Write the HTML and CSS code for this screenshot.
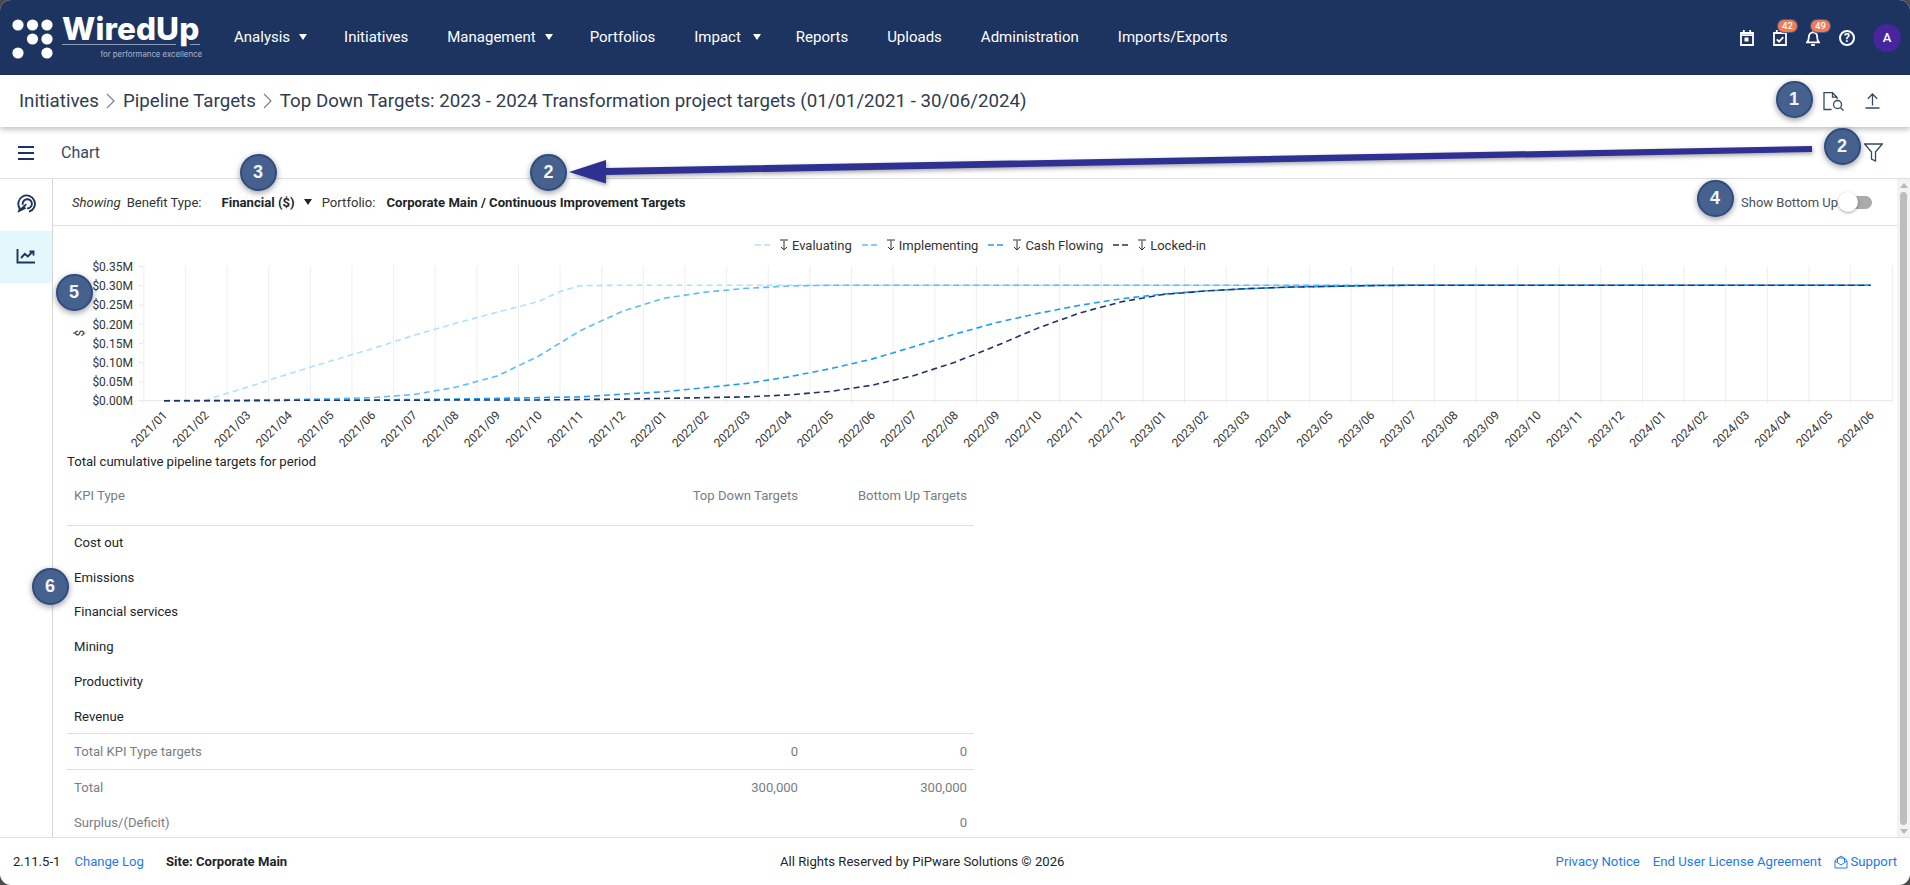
FILE: index.html
```
<!DOCTYPE html>
<html lang="en">
<head>
<meta charset="utf-8">
<title>WiredUp - Top Down Targets</title>
<link rel="stylesheet" href="styles.css">
</head>
<body>
<div class="app">
  <header class="topbar">
    <div class="logo">
      <svg class="logo-dots" viewBox="0 0 62 75" width="62" height="75">
        <circle cx="18" cy="25" r="5.6"/><circle cx="32.5" cy="25" r="5.6"/><circle cx="47" cy="25" r="5.6"/>
        <circle cx="32.5" cy="39" r="5.6"/><circle cx="47" cy="39" r="5.6"/>
        <circle cx="18" cy="53" r="5.6"/><circle cx="47" cy="53" r="5.6"/>
      </svg>
      <div class="logo-text">
        <div class="logo-name">WiredUp</div>
        <div class="logo-tag">for performance excellence</div>
      </div>
    </div>
    <nav class="nav">
      <a class="nav-item has-caret">Analysis<span class="caret"></span></a>
      <a class="nav-item">Initiatives</a>
      <a class="nav-item has-caret">Management<span class="caret"></span></a>
      <a class="nav-item">Portfolios</a>
      <a class="nav-item has-caret impact">Impact<span class="caret caret-wide"></span></a>
      <a class="nav-item">Reports</a>
      <a class="nav-item">Uploads</a>
      <a class="nav-item">Administration</a>
      <a class="nav-item">Imports/Exports</a>
    </nav>
    <div class="top-icons">
      <span class="top-icon">
        <svg viewBox="0 0 14 16" width="14" height="16"><path class="ic-w" d="M1 3h12v12H1zM1 5.2h12M3.8 0v3M10.2 0v3"/><rect class="ic-f" x="4.5" y="7.5" width="4" height="4"/></svg>
      </span>
      <span class="top-icon">
        <svg viewBox="0 0 14 16" width="14" height="16"><path class="ic-w" d="M1 3h12v12H1zM3.8 0v3M10.2 0v3M3.8 9.3l2.3 2.3 4.2-4.4"/></svg>
        <span class="count">42</span>
      </span>
      <span class="top-icon">
        <svg viewBox="0 0 14 16" width="14" height="16"><path class="ic-w" d="M1 12.3h12c-1.4-1.2-1.8-2.6-1.8-5 0-2.9-1.7-4.9-4.2-4.9S2.800 4.400 2.800 7.300c0 2.400-.4 3.800-1.800 5zM5.200 15h3.600M7 0v2.400"/></svg>
        <span class="count">49</span>
      </span>
      <span class="top-icon help-icon">
        <svg viewBox="0 0 16 16" width="16" height="16"><circle class="ic-w ic-help" cx="8" cy="8" r="7"/><text class="help-q" x="8" y="12.300">?</text></svg>
      </span>
      <span class="avatar">A</span>
    </div>
  </header>

  <section class="crumbbar">
    <div class="crumbs">
      <span>Initiatives</span>
      <svg class="chev" viewBox="0 0 9 16" width="9" height="16"><path d="M1 1l7 7-7 7"/></svg>
      <span>Pipeline Targets</span>
      <svg class="chev" viewBox="0 0 9 16" width="9" height="16"><path d="M1 1l7 7-7 7"/></svg>
      <span>Top Down Targets: 2023 - 2024 Transformation project targets (01/01/2021 - 30/06/2024)</span>
    </div>
    <div class="crumb-actions">
      <svg class="line-ic" viewBox="0 0 21 19" width="21" height="19"><path d="M8.500 17.500H1V.7h8.500l4.500 4.500v2M9.500.7v4.500H14M17.500 15.800l3 2.700"/><circle cx="14.500" cy="12.500" r="4"/></svg>
      <svg class="line-ic" viewBox="0 0 15 16" width="15" height="16"><path d="M7.500 12.500V1M2.800 5.700L7.500 1l4.700 4.700M.5 15h14"/></svg>
    </div>
  </section>

  <section class="toolbar">
    <svg class="burger" viewBox="0 0 16 14" width="16" height="14"><path d="M0 1h16M0 7h16M0 13h16"/></svg>
    <span class="toolbar-title">Chart</span>
    <svg class="funnel" viewBox="0 0 19 19" width="19" height="19"><path d="M.7 1h17.600l-6.800 8v9l-4-2V9z"/></svg>
  </section>

  <div class="workspace">
    <aside class="rail">
      <div class="rail-item">
        <svg class="rail-ic" viewBox="0 0 20 20" width="20" height="20"><path d="M3.800 14.500A8.300 8.300 0 1 1 13 17.700M6.800 10.800a4.600 4.600 0 1 1 4.200 3.600"/><path class="rail-fill" d="M1.500 18.800l1.800-6 1.600 1.500 2.300-2.500L10 9.500l.9.900-2 2.600 1.400 1.600z"/></svg>
      </div>
      <div class="rail-item rail-active">
        <svg class="rail-ic" viewBox="0 0 20 20" width="20" height="20"><path d="M1.500 3v13.500h17.500M5 12l3.800-4.200 3 2.700 4.800-4.800M13.500 5.500h4v4"/></svg>
      </div>
    </aside>
    <main class="content">
      <div class="filters">
        <em class="f-show">Showing</em>
        <span class="f-label">Benefit Type:</span>
        <strong class="f-value">Financial ($)</strong>
        <span class="caret caret-dark"></span>
        <span class="f-label f-port">Portfolio:</span>
        <strong class="f-value">Corporate Main / Continuous Improvement Targets</strong>
        <div class="bottom-up">
          <span>Show Bottom Up</span>
          <span class="switch"><span class="knob"></span></span>
        </div>
      </div>

      <div class="legend">
        <span class="lg-item"><svg class="lg-swatch s-eval" viewBox="0 0 18 4" width="18" height="4"><path d="M0 2h18"/></svg><svg class="lg-arrow" viewBox="0 0 10 12" width="10" height="12"><path d="M1 1h8M5 1.500V11M2 8l3 3 3-3"/></svg>Evaluating</span>
        <span class="lg-item"><svg class="lg-swatch s-impl" viewBox="0 0 18 4" width="18" height="4"><path d="M0 2h18"/></svg><svg class="lg-arrow" viewBox="0 0 10 12" width="10" height="12"><path d="M1 1h8M5 1.500V11M2 8l3 3 3-3"/></svg>Implementing</span>
        <span class="lg-item"><svg class="lg-swatch s-cash" viewBox="0 0 18 4" width="18" height="4"><path d="M0 2h18"/></svg><svg class="lg-arrow" viewBox="0 0 10 12" width="10" height="12"><path d="M1 1h8M5 1.500V11M2 8l3 3 3-3"/></svg>Cash Flowing</span>
        <span class="lg-item"><svg class="lg-swatch s-lock" viewBox="0 0 18 4" width="18" height="4"><path d="M0 2h18"/></svg><svg class="lg-arrow" viewBox="0 0 10 12" width="10" height="12"><path d="M1 1h8M5 1.500V11M2 8l3 3 3-3"/></svg>Locked-in</span>
      </div>

      <svg class="chart" viewBox="53 264 1844 188" width="1844" height="188">
        <defs>
          <pattern id="grid" patternUnits="userSpaceOnUse" x="143.300" y="266" width="41.630" height="138"><path class="grid-line" d="M.5 0v138"/></pattern>
        </defs>
        <rect x="143" y="266" width="1750" height="138" fill="url(#grid)"/>
        <path class="axis" d="M143.500 400.700H1892M139 266.500h4M139 285.700h4M139 305h4M139 324.200h4M139 343.400h4M139 362.700h4M139 381.900h4M139 400.700h4"/>
        <g class="y-labels">
          <text x="133" y="270.500">$0.35M</text>
          <text x="133" y="289.500">$0.30M</text>
          <text x="133" y="308.500">$0.25M</text>
          <text x="133" y="328.500">$0.20M</text>
          <text x="133" y="347.500">$0.15M</text>
          <text x="133" y="366.500">$0.10M</text>
          <text x="133" y="385.500">$0.05M</text>
          <text x="133" y="404.500">$0.00M</text>
        </g>
        <text class="y-title" transform="translate(84 333) rotate(-90)">$</text>
        <g transform="translate(164 400.700) scale(41.630 -384.860)">
          <polyline class="series s-eval" points="0,0 1,.002 2,.035 3,.07 4,.103 5,.135 6,.17 7,.201 8,.23 9,.258 9.5,.283 10,.299 11,.3 41,.3"/>
          <polyline class="series s-impl" points="0,0 1,.001 2,.002 3,.003 4,.005 5,.008 6,.016 7,.035 8,.064 9,.116 10,.182 11,.232 12,.266 13,.282 14,.292 15,.298 16,.3 41,.3"/>
          <polyline class="series s-cash" points="0,0 1,0 2,.001 3,.001 4,.001 5,.002 6,.003 7,.004 8,.006 9,.008 10,.01 11,.017 12,.023 13,.034 14,.045 15,.062 16,.083 17,.108 18,.14 19,.173 20,.203 21,.227 22,.248 23,.265 24,.277 25,.285 26,.291 27,.295 28,.297 29,.299 30,.3 41,.3"/>
          <polyline class="series s-lock" points="0,0 1,0 2,0 3,.001 4,.001 5,.001 6,.001 7,.002 8,.002 9,.002 10,.003 11,.004 12,.006 13,.008 14,.01 15,.015 16,.024 17,.04 18,.065 19,.1 20,.143 21,.189 22,.228 23,.257 24,.276 25,.285 26,.291 27,.295 28,.297 29,.299 30,.3 41,.3"/>
        </g>
        <g class="x-labels">
          <text transform="translate(168 416) rotate(-45)">2021/01</text>
          <text transform="translate(209.630 416) rotate(-45)">2021/02</text>
          <text transform="translate(251.260 416) rotate(-45)">2021/03</text>
          <text transform="translate(292.890 416) rotate(-45)">2021/04</text>
          <text transform="translate(334.520 416) rotate(-45)">2021/05</text>
          <text transform="translate(376.150 416) rotate(-45)">2021/06</text>
          <text transform="translate(417.780 416) rotate(-45)">2021/07</text>
          <text transform="translate(459.410 416) rotate(-45)">2021/08</text>
          <text transform="translate(501.040 416) rotate(-45)">2021/09</text>
          <text transform="translate(542.670 416) rotate(-45)">2021/10</text>
          <text transform="translate(584.300 416) rotate(-45)">2021/11</text>
          <text transform="translate(625.930 416) rotate(-45)">2021/12</text>
          <text transform="translate(667.560 416) rotate(-45)">2022/01</text>
          <text transform="translate(709.190 416) rotate(-45)">2022/02</text>
          <text transform="translate(750.820 416) rotate(-45)">2022/03</text>
          <text transform="translate(792.450 416) rotate(-45)">2022/04</text>
          <text transform="translate(834.080 416) rotate(-45)">2022/05</text>
          <text transform="translate(875.710 416) rotate(-45)">2022/06</text>
          <text transform="translate(917.340 416) rotate(-45)">2022/07</text>
          <text transform="translate(958.970 416) rotate(-45)">2022/08</text>
          <text transform="translate(1000.600 416) rotate(-45)">2022/09</text>
          <text transform="translate(1042.230 416) rotate(-45)">2022/10</text>
          <text transform="translate(1083.860 416) rotate(-45)">2022/11</text>
          <text transform="translate(1125.490 416) rotate(-45)">2022/12</text>
          <text transform="translate(1167.120 416) rotate(-45)">2023/01</text>
          <text transform="translate(1208.750 416) rotate(-45)">2023/02</text>
          <text transform="translate(1250.380 416) rotate(-45)">2023/03</text>
          <text transform="translate(1292.010 416) rotate(-45)">2023/04</text>
          <text transform="translate(1333.640 416) rotate(-45)">2023/05</text>
          <text transform="translate(1375.270 416) rotate(-45)">2023/06</text>
          <text transform="translate(1416.900 416) rotate(-45)">2023/07</text>
          <text transform="translate(1458.530 416) rotate(-45)">2023/08</text>
          <text transform="translate(1500.160 416) rotate(-45)">2023/09</text>
          <text transform="translate(1541.790 416) rotate(-45)">2023/10</text>
          <text transform="translate(1583.420 416) rotate(-45)">2023/11</text>
          <text transform="translate(1625.050 416) rotate(-45)">2023/12</text>
          <text transform="translate(1666.680 416) rotate(-45)">2024/01</text>
          <text transform="translate(1708.310 416) rotate(-45)">2024/02</text>
          <text transform="translate(1749.940 416) rotate(-45)">2024/03</text>
          <text transform="translate(1791.570 416) rotate(-45)">2024/04</text>
          <text transform="translate(1833.200 416) rotate(-45)">2024/05</text>
          <text transform="translate(1874.830 416) rotate(-45)">2024/06</text>
        </g>
      </svg>

      <div class="summary">
        <h2 class="summary-title">Total cumulative pipeline targets for period</h2>
        <table class="kpi">
          <colgroup><col class="c-name"><col class="c-num"><col class="c-num"></colgroup>
          <thead>
            <tr><th>KPI Type</th><th class="num">Top Down Targets</th><th class="num">Bottom Up Targets</th></tr>
          </thead>
          <tbody>
            <tr><td>Cost out</td><td></td><td></td></tr>
            <tr><td>Emissions</td><td></td><td></td></tr>
            <tr><td>Financial services</td><td></td><td></td></tr>
            <tr><td>Mining</td><td></td><td></td></tr>
            <tr><td>Productivity</td><td></td><td></td></tr>
            <tr><td>Revenue</td><td></td><td></td></tr>
          </tbody>
          <tfoot>
            <tr class="lined tall"><td>Total KPI Type targets</td><td class="num">0</td><td class="num">0</td></tr>
            <tr class="lined"><td>Total</td><td class="num">300,000</td><td class="num">300,000</td></tr>
            <tr><td>Surplus/(Deficit)</td><td class="num"></td><td class="num">0</td></tr>
          </tfoot>
        </table>
      </div>
    </main>
    <div class="scrollbar">
      <span class="sb-up"></span>
      <span class="sb-thumb"></span>
      <span class="sb-down"></span>
    </div>
  </div>

  <footer class="footer">
    <div class="foot-left">
      <span>2.11.5-1</span>
      <a class="link">Change Log</a>
      <strong class="site">Site: Corporate Main</strong>
    </div>
    <div class="foot-mid">All Rights Reserved by PiPware Solutions © 2026</div>
    <div class="foot-right">
      <a class="link">Privacy Notice</a>
      <a class="link">End User License Agreement</a>
      <a class="link support"><svg class="mail" viewBox="0 0 14 14" width="14" height="14"><path d="M1 5.500v7.500h12V5.500L7 1zM1 6l6 4 6-4M3.500 7V3h7v4"/></svg>Support</a>
    </div>
  </footer>

  <svg class="arrow-layer" viewBox="0 0 1910 885" width="1910" height="885">
    <path class="note-arrow" d="M1812 146L606 168v-8l-37 12 37 11.500V175l1206-23z"/>
  </svg>
  <span class="mark m1">1</span>
  <span class="mark m2a">2</span>
  <span class="mark m2b">2</span>
  <span class="mark m3">3</span>
  <span class="mark m4">4</span>
  <span class="mark m5">5</span>
  <span class="mark m6">6</span>
</div>
</body>
</html>
```
FILE: styles.css
```
* { box-sizing: border-box; }
html, body { margin: 0; height: 100%; background: #4a4a4a; overflow: hidden; }
body { font-family: Roboto, "Liberation Sans", sans-serif; font-size: 13.120px; color: #212529; }
.app { position: relative; width: 1910px; height: 885px; display: flex; flex-direction: column; background: #fff; border-radius: 11px; overflow: hidden; }

/* top bar */
.topbar { flex: 0 0 75px; display: flex; align-items: center; background: #1d3461; color: #fff; }
.logo { width: 234px; height: 75px; display: flex; flex: none; }
.logo-dots { flex: none; fill: #fff; }
.logo-text { padding-top: 12px; width: 140px; }
.logo-name { font-family: Inter, "Open Sans", sans-serif; font-weight: 800; font-size: 31.500px; line-height: 33px; letter-spacing: .1px; color: #fff; width: 138px; white-space: nowrap; background: linear-gradient(to right, #8b9ab5 114px, transparent 114px, transparent 128px, #8b9ab5 128px) left bottom / 100% 1px no-repeat; }
.logo-tag { font-family: Inter, sans-serif; font-size: 7.800px; line-height: 12px; margin-top: 3px; color: #a9b4c8; text-align: right; white-space: nowrap; }
.nav { display: flex; align-items: center; gap: 39px; margin-top: -2px; }
.nav-item { font-size: 15px; color: #fff; display: flex; align-items: center; white-space: nowrap; }
.has-caret { margin-right: -2px; }
.impact { margin-right: -4px; }
.caret { display: inline-block; width: 0; height: 0; margin-left: 9px; border-left: 4px solid transparent; border-right: 4px solid transparent; border-top: 6px solid #fff; }
.caret-wide { margin-left: 12px; }
.caret-dark { border-top-color: #212529; margin-left: 9px; }
.top-icons { margin-left: auto; display: flex; align-items: center; gap: 19px; padding-right: 9px; }
.top-icon { position: relative; display: flex; width: 14px; height: 16px; }
.help-icon { width: 16px; margin-right: -1px; }
.ic-w { fill: none; stroke: #fff; stroke-width: 1.800; }
.ic-help { stroke-width: 2; }
.ic-f { fill: #fff; }
.help-q { font-family: Roboto, sans-serif; font-weight: 700; font-size: 12px; fill: #fff; text-anchor: middle; }
.count { position: absolute; left: 5px; top: -10px; width: 19px; height: 12px; border-radius: 6px; background: #f47b50; box-shadow: 0 0 0 1px #4a5b92; color: #fff; font-size: 9.500px; font-weight: 500; line-height: 12px; text-align: center; }
.avatar { width: 28px; height: 28px; border-radius: 50%; background: #47259b; color: #fff; font-size: 13px; font-weight: 500; line-height: 28px; text-align: center; }

/* breadcrumb */
.crumbbar { flex: 0 0 52px; display: flex; align-items: center; justify-content: space-between; padding: 0 30px 0 19px; background: #fff; box-shadow: 0 2px 6px rgba(0,0,0,.28); position: relative; z-index: 1; }
.crumbs { display: flex; align-items: center; font-size: 18.700px; color: #2f3d4f; white-space: nowrap; }
.chev { margin: 0 7.500px; }
.chev path { fill: none; stroke: #76828f; stroke-width: 1.200; }
.crumb-actions { display: flex; align-items: center; gap: 21px; }
.line-ic { fill: none; stroke: #34495e; stroke-width: 1.300; }

/* chart title toolbar */
.toolbar { flex: 0 0 52px; display: flex; align-items: center; padding-left: 18px; border-bottom: 1px solid #dfdfdf; }
.burger { fill: none; stroke: #1d3461; stroke-width: 2; }
.toolbar-title { margin-left: 27px; font-size: 16px; color: #34495e; }
.funnel { margin-left: auto; margin-right: 27px; fill: none; stroke: #34495e; stroke-width: 1.300; }

/* workspace */
.workspace { flex: 1 1 0; min-height: 0; display: flex; border-bottom: 1px solid #dfdfdf; }
.rail { flex: 0 0 53px; border-right: 1px solid #d5d5d5; }
.rail-item { height: 52px; display: flex; align-items: center; justify-content: center; padding: 0 1px 3px 0; }
.rail-active { background: #e3f8fc; }
.rail-ic { fill: none; stroke: #1d3461; stroke-width: 1.900; }
.rail-fill { fill: #1d3461; stroke: none; }
.content { flex: 1 1 0; min-width: 0; overflow: hidden; }

.filters { height: 47px; display: flex; align-items: center; padding-left: 19px; padding-right: 25px; border-bottom: 1px solid #dfdfdf; white-space: nowrap; }
.f-show { margin-right: 6px; color: #333; }
.f-label { color: #333; }
.f-value { margin-left: 20px; font-weight: 700; font-size: 13.120px; color: #212529; }
.f-port { margin-left: 10px; }
.f-port + .f-value { margin-left: 11px; }
.bottom-up { margin-left: auto; display: flex; align-items: center; color: #4a4f55; font-size: 13px; }
.switch { position: relative; display: block; width: 25px; height: 13px; margin-left: 9px; border-radius: 7px; background: #aaa; }
.knob { position: absolute; left: -9px; top: -3.500px; width: 20px; height: 20px; border-radius: 50%; background: #fff; box-shadow: 0 1px 3px rgba(0,0,0,.35); }

.legend { height: 38px; display: flex; align-items: center; justify-content: center; gap: 10px; padding-left: 11px; font-size: 13px; color: #333; }
.lg-item { display: flex; align-items: center; }
.lg-swatch { margin-right: 6px; fill: none; stroke-width: 1.500; stroke-dasharray: 6 3; }
.lg-arrow { margin-right: 3px; fill: none; stroke: #333; stroke-width: 1; }
.s-eval { stroke: #aee0ff; }
.s-impl { stroke: #5dbcff; }
.s-cash { stroke: #1a9dfd; }
.s-lock { stroke: #1d3461; }

.chart { display: block; overflow: visible; }
.grid-line { stroke: #eee; stroke-width: 1; fill: none; }
.axis { stroke: #e6e6e6; stroke-width: 1; fill: none; }
.y-labels text { font-size: 12px; fill: #333; text-anchor: end; }
.y-title { font-size: 12px; fill: #333; text-anchor: middle; }
.x-labels text { font-size: 12px; fill: #333; text-anchor: end; }
.series { fill: none; stroke-width: 1.600; stroke-dasharray: 6 4; vector-effect: non-scaling-stroke; }

.summary { padding-left: 14px; }
.summary-title { margin: 0; height: 20px; font-size: 13.120px; font-weight: 400; line-height: 20px; color: #212529; }
.kpi { width: 907px; border-collapse: collapse; table-layout: fixed; }
.c-name { width: 569px; }
.c-num { width: 169px; }
.kpi th { height: 53px; padding: 0 7px 6px; border-bottom: 1px solid #dfdfdf; font-size: 13.120px; font-weight: 400; color: #777d84; text-align: left; }
.kpi td { height: 34.800px; padding: 0 7px; font-size: 13.120px; color: #212529; }
.kpi tfoot td { height: 35px; color: #777d84; }
.kpi tfoot .tall td { height: 36px; }
.kpi .lined td { border-top: 1px solid #dfdfdf; }
.kpi .num { text-align: right; padding-right: 7px; }

/* scrollbar */
.scrollbar { flex: 0 0 13px; display: flex; flex-direction: column; align-items: center; background: #f3f3f3; padding: 4px 0 3px; }
.sb-thumb { flex: 1 1 0; width: 7px; margin: 4px 0; border-radius: 4px; background: #bdbdbd; }
.sb-up, .sb-down { width: 0; height: 0; border-left: 4px solid transparent; border-right: 4px solid transparent; }
.sb-up { border-bottom: 5px solid #b8b8b8; }
.sb-down { border-top: 5px solid #b8b8b8; }

/* footer */
.footer { flex: 0 0 47px; display: flex; align-items: center; padding: 0 13px; color: #212529; white-space: nowrap; }
.foot-left { width: 767px; display: flex; align-items: center; gap: 14px; }
.site { margin-left: 8px; font-weight: 700; }
.foot-right { margin-left: auto; display: flex; align-items: center; gap: 13px; font-size: 13.200px; }
.link { color: #2479e8; }
.support { display: flex; align-items: center; gap: 2px; }
.mail { fill: none; stroke: #2479e8; stroke-width: 1; }

/* annotation overlay */
.arrow-layer { position: absolute; left: 0; top: 0; pointer-events: none; z-index: 2; }
.note-arrow { fill: #2e3192; filter: drop-shadow(1px 2px 2px rgba(0,0,0,.35)); }
.mark { position: absolute; z-index: 3; width: 37px; height: 37px; border-radius: 50%; background: #46618e; border: 2px solid #2f4c80; box-shadow: 0 2px 6px rgba(0,0,0,.4); color: #f2f4f8; font-family: "Liberation Sans", sans-serif; font-size: 18px; font-weight: 700; line-height: 33px; text-align: center; }
.m1 { left: 1775.500px; top: 80.500px; }
.m2a { left: 530px; top: 153.500px; }
.m2b { left: 1823.500px; top: 127.500px; }
.m3 { left: 239.500px; top: 153.500px; }
.m4 { left: 1696.500px; top: 179.500px; }
.m5 { left: 55.500px; top: 273.500px; }
.m6 { left: 31.500px; top: 567.500px; }
```
